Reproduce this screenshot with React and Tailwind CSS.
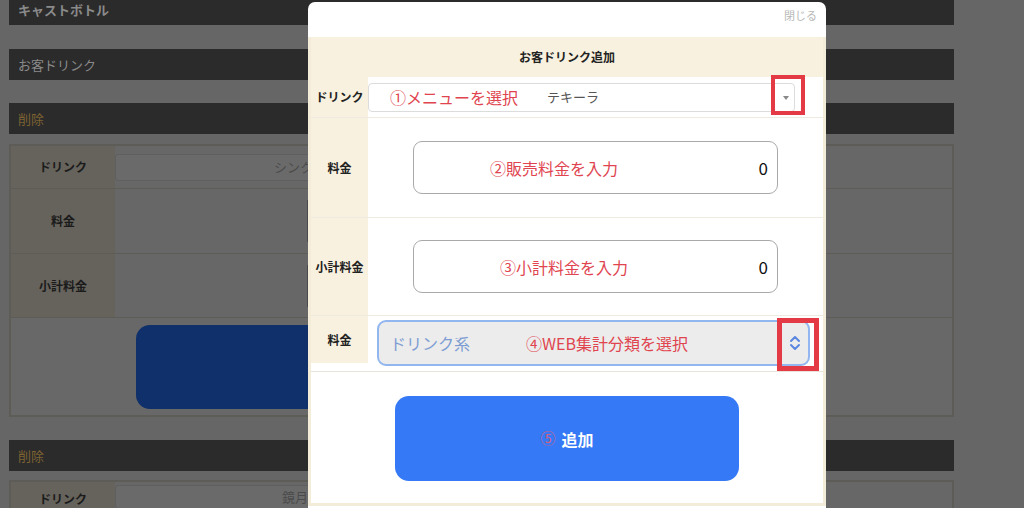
const font = "font-['Noto_Sans_CJK_JP','Noto_Sans',sans-serif]";

function Bar({ children, tone = 'gray', className = '' }) {
  return (
    <div className={`h-[31px] bg-[#2b2b2b] flex items-center pl-[9px] text-[13px] ${tone === 'gray' ? 'text-[#8a8a8a]' : 'text-[#7d6232]'} ${className}`}>
      {children}
    </div>
  );
}

function BgRow({ label, h, top = false, children }) {
  return (
    <div className={`flex border-b border-[#5e5c57] ${h}`}>
      <div className={`w-[104px] shrink-0 bg-[#66635c] flex justify-center text-[12px] font-bold text-[#1b1b1b] ${top ? 'items-start pt-[8px]' : 'items-center'}`}>
        {label}
      </div>
      <div className="flex-1 bg-[#676767] flex items-center">{children}</div>
    </div>
  );
}

function Background() {
  return (
    <div className="w-[945px] ml-[9px]">
      <Bar className="-mt-[6px] font-bold">キャストボトル</Bar>
      <Bar className="mt-[24px]">お客ドリンク</Bar>
      <Bar tone="gold" className="mt-[23px]">削除</Bar>

      <div className="mt-[10px] border-2 border-[#5e5c57]">
        <BgRow label="ドリンク" h="h-[43px]">
          <div className="h-[27px] w-[690px] bg-[#6a6a6a] border border-[#5f5f5f] rounded-[3px] text-[13px] text-[#4a4a4a] pl-[158px] flex items-center">
            シンクロ
          </div>
        </BgRow>
        <BgRow label="料金" h="h-[65px]">
          <div className="ml-[192px] h-[42px] w-[4px] border-l-2 border-[#4a4a4a]" />
        </BgRow>
        <BgRow label="小計料金" h="h-[64px]">
          <div className="ml-[192px] h-[42px] w-[4px] border-l-2 border-[#4a4a4a]" />
        </BgRow>
        <div className="h-[97px] bg-[#686868] flex items-center pl-[125px]">
          <div className="w-[680px] h-[84px] rounded-[14px] bg-[#10306b]" />
        </div>
      </div>

      <Bar tone="gold" className="mt-[23px]">削除</Bar>
      <div className="mt-[9px] border-2 border-[#5e5c57]">
        <BgRow label="ドリンク" h="h-[43px]" top>
          <div className="self-start mt-[3px] h-[24px] w-[690px] bg-[#6a6a6a] border border-[#5f5f5f] rounded-[3px] text-[13px] text-[#4a4a4a] pl-[166px] flex items-center">
            鏡月
          </div>
        </BgRow>
      </div>
    </div>
  );
}

function Label({ children, className = '' }) {
  return (
    <div className={`w-[57px] shrink-0 bg-[#f8f1df] flex items-center justify-center text-[12px] font-bold text-[#222] ${className}`}>
      {children}
    </div>
  );
}

function ChevronUpDown() {
  return (
    <svg width="12" height="16" viewBox="0 0 12 16" fill="none" stroke="#5b86e0" strokeWidth="2" strokeLinecap="round" strokeLinejoin="round">
      <path d="M2 6 L6 2 L10 6" />
      <path d="M2 10 L6 14 L10 10" />
    </svg>
  );
}

function Modal() {
  return (
    <div className="absolute left-[308px] top-[2px] w-[518px] h-[520px] bg-white rounded-t-[7px] overflow-hidden">
      <div className="h-[35px] flex justify-end items-start pt-[5px] pr-[9px] text-[11px] text-[#b8b8b8]">
        閉じる
      </div>
      <div className="border-x-[3px] border-b-[3px] border-[#f3ecd8] relative">
        <div className="h-[40px] bg-[#f8f1df] flex items-center justify-center text-[12px] font-bold text-[#222]">
          お客ドリンク追加
        </div>

        <div className="flex h-[41px] border-b border-[#efeae0]">
          <Label>ドリンク</Label>
          <div className="flex-1 flex items-center">
            <div className="w-[427px] h-[29px] border border-[#dcdcdc] rounded-[4px] flex items-center relative">
              <span className="ml-[21px] text-[16px] text-[#e0454f]">①メニューを選択</span>
              <span className="ml-[29px] text-[13px] text-[#555]">テキーラ</span>
              <span className="absolute right-[5px] top-[12px] w-0 h-0 border-x-[3px] border-x-transparent border-t-[4px] border-t-[#888]" />
            </div>
          </div>
        </div>

        <div className="flex h-[100px] border-b border-[#efeae0]">
          <Label>料金</Label>
          <div className="flex-1 flex items-center justify-center">
            <div className="w-[365px] h-[53px] border border-[#a9a9a9] rounded-[9px] flex items-center relative">
              <span className="ml-[76px] text-[16px] text-[#e0454f]">②販売料金を入力</span>
              <span className="absolute right-[9px] text-[17px] text-[#111]">0</span>
            </div>
          </div>
        </div>

        <div className="flex h-[98px] border-b border-[#efeae0]">
          <Label>小計料金</Label>
          <div className="flex-1 flex items-center justify-center">
            <div className="w-[365px] h-[53px] border border-[#a9a9a9] rounded-[9px] flex items-center relative">
              <span className="ml-[86px] text-[16px] text-[#e0454f]">③小計料金を入力</span>
              <span className="absolute right-[9px] text-[17px] text-[#111]">0</span>
            </div>
          </div>
        </div>

        <div className="flex h-[56px] border-b border-[#e8e4dc]">
          <div className="flex flex-col">
            <Label className="h-[47px]">料金</Label>
          </div>
          <div className="flex-1 pt-[4px] pl-[9px]">
            <div className="w-[433px] h-[46px] bg-[#ececec] border-2 border-[#92b6ef] rounded-[9px] flex items-center relative">
              <span className="ml-[11px] text-[16px] text-[#7d9dd2]">ドリンク系</span>
              <span className="ml-[56px] text-[16px] text-[#e0454f]">④WEB集計分類を選択</span>
              <span className="absolute right-[7px] top-[13px]"><ChevronUpDown /></span>
            </div>
          </div>
        </div>

        <div className="h-[131px] flex justify-center pt-[24px]">
          <div className="w-[344px] h-[85px] rounded-[14px] bg-[#3579f6] flex items-center justify-center gap-[6px]">
            <span className="text-[15px] text-[#d6607a]">⑤</span>
            <span className="text-[16px] font-bold text-white">追加</span>
          </div>
        </div>

        <div className="absolute left-[460px] top-[38px] w-[34px] h-[40px] border-4 border-[#e33a45]" />
        <div className="absolute left-[466px] top-[281px] w-[42px] h-[53px] border-[5px] border-[#e33a45]" />
      </div>
    </div>
  );
}

export default function App() {
  return (
    <div className={`relative w-[1024px] h-[508px] overflow-hidden bg-[#666666] ${font}`}>
      <Background />
      <Modal />
    </div>
  );
}
